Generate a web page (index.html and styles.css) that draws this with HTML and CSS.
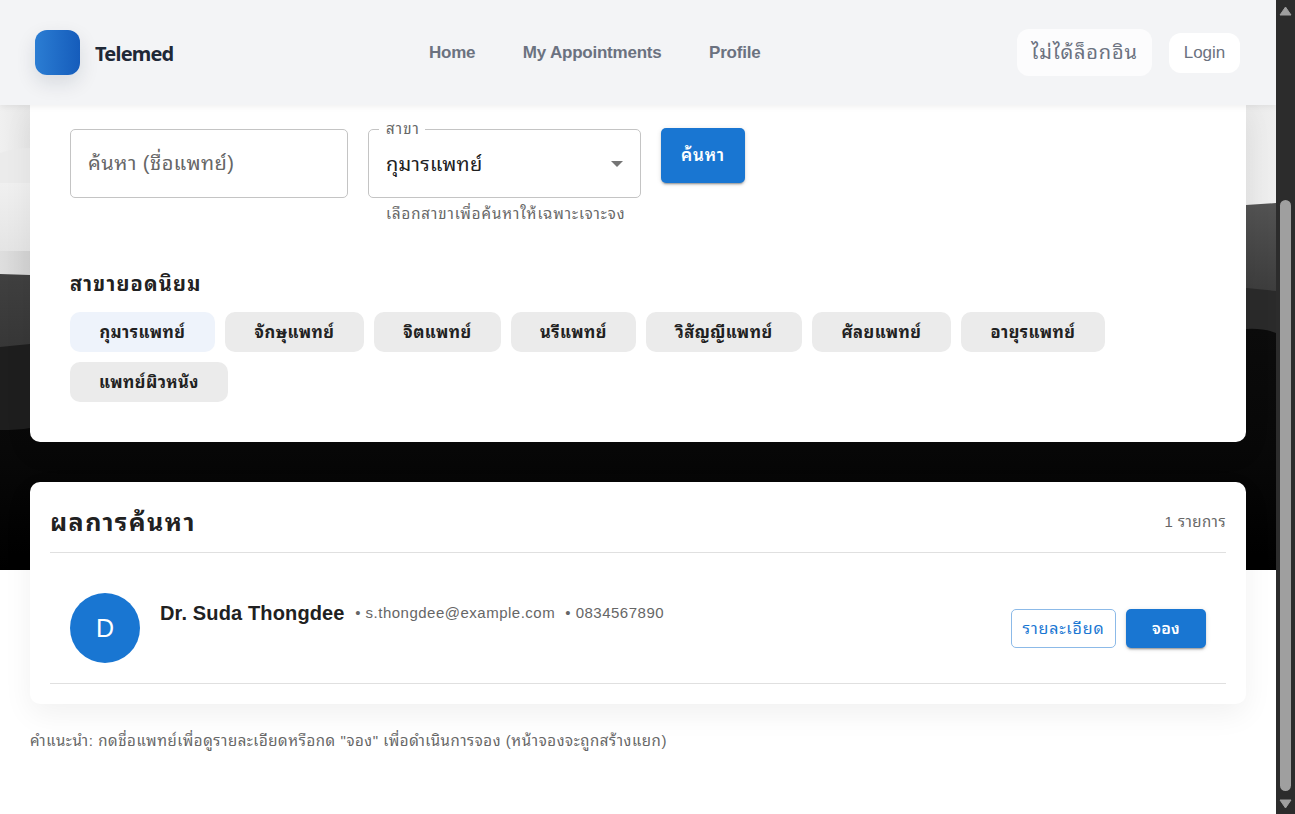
FILE: index.html
```html
<!DOCTYPE html>
<html lang="th">
<head>
<meta charset="utf-8">
<title>Telemed</title>
<link rel="stylesheet" href="styles.css">
</head>
<body>
<div class="viewport">
  <div class="page">
    <svg class="backdrop" viewBox="0 0 1276 570" preserveAspectRatio="none" aria-hidden="true">
      <defs>
        <linearGradient id="sky" x1="0" y1="0" x2="1" y2="0"><stop offset="0" stop-color="#f0f0f0"/><stop offset="1" stop-color="#e6e6e6"/></linearGradient>
        <linearGradient id="mist" x1="0" y1="0" x2="0" y2="1"><stop offset="0" stop-color="#f0f0f0"/><stop offset="1" stop-color="#e4e4e4"/></linearGradient>
        <linearGradient id="haze" x1="0" y1="0" x2="1" y2="0"><stop offset="0" stop-color="#dedede"/><stop offset="1" stop-color="#d2d2d2"/></linearGradient>
        <linearGradient id="edge" x1="0" y1="0" x2="1" y2="0"><stop offset="0" stop-color="#e9e9e9"/><stop offset="1" stop-color="#efefef"/></linearGradient>
        <linearGradient id="far" x1="0" y1="0" x2="0" y2="1"><stop offset="0" stop-color="#404040"/><stop offset="1" stop-color="#1c1c1c"/></linearGradient>
        <linearGradient id="farRight" x1="0" y1="0" x2="0" y2="1"><stop offset="0" stop-color="#535353"/><stop offset="1" stop-color="#3c3c3c"/></linearGradient>
        <linearGradient id="near" x1="0" y1="0" x2="0" y2="1"><stop offset="0" stop-color="#0c0c0c"/><stop offset=".5" stop-color="#080808"/><stop offset="1" stop-color="#000"/></linearGradient>
      </defs>
      <rect width="30" height="190" fill="url(#sky)"/>
      <path d="M0 153Q14 148 30 148V190H0Z" fill="#ebebeb"/>
      <rect y="183" width="30" height="70" fill="url(#mist)"/>
      <rect y="251" width="30" height="25" fill="url(#haze)"/>
      <rect x="1246" width="30" height="206" fill="url(#edge)"/>
      <path d="M0 274L30 275V570H0Z" fill="url(#far)"/>
      <path d="M0 347L30 344V570H0Z" fill="#1e1e1e"/>
      <path d="M1246 205L1276 203V295H1246Z" fill="url(#farRight)"/>
      <path d="M1246 288L1276 291V340H1246Z" fill="#2a2a2a"/>
      <path d="M0 430Q18 430 30 428H1246V329Q1264 328 1276 333V570H0Z" fill="url(#near)"/>
    </svg>
    <header class="topbar">
      <div class="brand"><span class="logo"></span><span class="brand-name">Telemed</span></div>
      <nav class="nav"><a>Home</a><a>My Appointments</a><a>Profile</a></nav>
      <div class="account"><span class="status">ไม่ได้ล็อกอิน</span><a class="login">Login</a></div>
    </header>
    <main class="content">
      <section class="card search">
        <div class="form">
          <div class="field name-field"><span>ค้นหา (ชื่อแพทย์)</span></div>
          <div class="select-group">
            <div class="field select"><span class="label">สาขา</span><span class="value">กุมารแพทย์</span>
              <svg class="caret" width="12" height="6" viewBox="0 0 12 6"><path d="M0 0H12L6 6Z" fill="#757575"/></svg></div>
            <div class="helper">เลือกสาขาเพื่อค้นหาให้เฉพาะเจาะจง</div>
          </div>
          <button class="btn primary search-btn">ค้นหา</button>
        </div>
        <h2 class="popular">สาขายอดนิยม</h2>
        <div class="chips">
          <span class="chip active w145">กุมารแพทย์</span><span class="chip w139">จักษุแพทย์</span><span class="chip w127">จิตแพทย์</span><span class="chip w125">นรีแพทย์</span><span class="chip w156">วิสัญญีแพทย์</span><span class="chip w139">ศัลยแพทย์</span><span class="chip w144">อายุรแพทย์</span><span class="chip w158">แพทย์ผิวหนัง</span>
        </div>
      </section>
      <section class="card results">
        <div class="results-head"><h1>ผลการค้นหา</h1><span class="count">1 รายการ</span></div>
        <div class="doctor">
          <span class="avatar">D</span>
          <div class="info"><strong>Dr. Suda Thongdee</strong><span class="mail">• s.thongdee@example.com</span><span class="phone">• 0834567890</span></div>
          <div class="actions"><button class="btn outline">รายละเอียด</button><button class="btn primary book">จอง</button></div>
        </div>
      </section>
      <p class="hint">คำแนะนำ: กดชื่อแพทย์เพื่อดูรายละเอียดหรือกด "จอง" เพื่อดำเนินการจอง (หน้าจองจะถูกสร้างแยก)</p>
    </main>
  </div>
  <div class="scrollbar">
    <svg width="13" height="10" viewBox="0 0 13 10"><path d="M6.5 1L12 9H1Z" fill="#9f9f9f" stroke="#9f9f9f" stroke-linejoin="round"/></svg>
    <span class="thumb"></span>
    <svg width="13" height="10" viewBox="0 0 13 10"><path d="M6.5 9L12 1H1Z" fill="#9f9f9f" stroke="#9f9f9f" stroke-linejoin="round"/></svg>
  </div>
</div>
</body>
</html>
```
FILE: styles.css
```css
* { box-sizing: border-box; }
body { margin: 0; background: #fff; font-family: "Liberation Sans", Tahoma, "Leelawadee UI", "Noto Sans Thai Looped", "Noto Looped Thai", Loma, Waree, "Noto Sans Thai", sans-serif; color: #212121; white-space: nowrap; }
.viewport { display: grid; grid-template-columns: 1276px 19px; height: 814px; overflow: hidden; }
.page { position: relative; overflow: hidden; }
.backdrop { position: absolute; top: 0; left: 0; width: 1276px; height: 570px; }
.topbar { position: relative; z-index: 2; height: 105px; padding: 0 36px 0 35px; background: #f3f4f6; box-shadow: 0 2px 6px rgba(0,0,0,.06); display: grid; grid-template-columns: 394px 1fr auto; align-items: center; }
.brand { display: flex; align-items: center; gap: 15px; }
.logo { width: 45px; height: 45px; border-radius: 12px; background: linear-gradient(90deg, #2b7dd3, #155cbb); box-shadow: 0 8px 20px rgba(20,30,60,.12); }
.brand-name { font: 700 20px/28px "Noto Sans", sans-serif; color: #1f2937; padding-top: 3px; letter-spacing: -.8px; }
.nav { display: flex; gap: 47.5px; font-weight: 700; font-size: 17px; color: #6b7280; letter-spacing: -.22px; }
.account { display: flex; align-items: center; gap: 17px; color: #6b7280; }
.status { width: 135px; height: 47px; border-radius: 12px; background: #fcfcfd; text-align: center; font-size: 20px; line-height: 47px; letter-spacing: .8px; }
.login { width: 71px; height: 40px; border-radius: 12px; background: #fff; display: flex; align-items: center; justify-content: center; font-size: 17px; }
.content { position: relative; padding: 0 30px; }
.card { background: #fff; border-radius: 10px; box-shadow: 0 10px 30px rgba(0,0,0,.06); }
.search { height: 337px; padding: 23px 40px 0; border-radius: 0 0 10px 10px; }
.form { display: flex; gap: 20px; height: 139px; align-items: flex-start; }
.field { position: relative; height: 69px; margin-top: 1px; border: 1px solid #c4c4c4; border-radius: 5px; display: flex; align-items: center; padding: 0 17px; line-height: 30px; }
.name-field { width: 278px; font-size: 20px; color: #666; letter-spacing: .5px; padding-bottom: 2px; }
.select { width: 273px; font-size: 20px; justify-content: space-between; letter-spacing: .27px; }
.label { position: absolute; left: 10px; top: -11px; padding: 0 5px 0 7px; background: #fff; color: #666; font-size: 15px; line-height: 20px; letter-spacing: 1.1px; }
.helper { margin: 4px 0 0 18px; font-size: 15px; line-height: 24px; color: #666; letter-spacing: .93px; width: 255px; }
.btn { font-family: inherit; border-radius: 5px; border: 0; padding: 0; display: block; }
.primary { background: #1976d2; color: #fff; box-shadow: 0 3px 1px -2px rgba(0,0,0,.2), 0 2px 2px rgba(0,0,0,.14), 0 1px 5px rgba(0,0,0,.12); }
.search-btn { width: 84px; height: 55px; font-size: 17px; line-height: 28px; font-weight: 600; letter-spacing: .7px; }
.popular { margin: 0 0 12px; font-size: 20px; line-height: 28px; height: 33px; padding-top: 3px; letter-spacing: 1.2px; }
.chips { display: flex; flex-wrap: wrap; gap: 10px; }
.chip { height: 40px; border-radius: 10px; background: #ebebeb; font-size: 16.5px; font-weight: 700; line-height: 40px; text-align: center; letter-spacing: .45px; }
.active { background: #eef3fb; }
.w125 { width: 125px; }
.w127 { width: 127px; }
.w139 { width: 139px; }
.w144 { width: 144px; }
.w145 { width: 145px; }
.w156 { width: 156px; }
.w158 { width: 158px; }
.results { height: 222px; margin-top: 40px; padding: 0 20px; }
.results-head { height: 71px; border-bottom: 1px solid #e0e0e0; display: flex; justify-content: space-between; align-items: center; padding-top: 9px; }
.results-head h1 { margin: 0; font-size: 25px; line-height: 32px; letter-spacing: 1.45px; }
.count { font-size: 15px; line-height: 24px; color: #666; letter-spacing: .5px; }
.doctor { height: 131px; border-bottom: 1px solid #e0e0e0; display: flex; padding: 40px 20px 0; }
.avatar { width: 70px; height: 70px; border-radius: 50%; background: #1976d2; color: #fff; font-size: 25px; line-height: 70px; text-align: center; margin-right: 20px; }
.info { flex: 1; height: 40px; display: flex; align-items: center; font-size: 15px; line-height: 20px; color: #666; letter-spacing: .5px; }
.info strong { font-size: 20px; color: #212121; letter-spacing: .14px; margin-right: 10.5px; line-height: 26px; }
.mail, .phone { padding-bottom: 1px; }
.mail { margin-right: 10px; }
.actions { display: flex; gap: 10px; padding-top: 16px; }
.outline { width: 105px; height: 39px; border: 1px solid #8cbae8; background: #fff; color: #1976d2; font-size: 16px; line-height: 26px; letter-spacing: .85px; }
.book { width: 80px; height: 39px; font-size: 16px; line-height: 26px; font-weight: 600; letter-spacing: .3px; }
.hint { margin: 25px 0 0; font-size: 15px; line-height: 24px; color: #666; letter-spacing: .58px; }
.scrollbar { position: relative; background: #2c2c2c; display: flex; flex-direction: column; align-items: center; padding: 6px 0 5px; }
.thumb { width: 11px; height: 591px; border-radius: 6px; background: #9f9f9f; margin: 184px 0 auto; }
```
